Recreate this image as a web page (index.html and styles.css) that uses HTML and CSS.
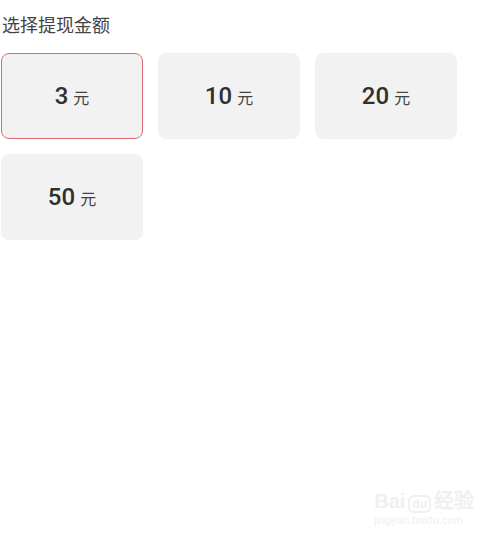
FILE: index.html
```html
<!DOCTYPE html>
<html lang="zh-CN">
<head>
  <meta charset="UTF-8">
  <meta name="viewport" content="width=device-width, initial-scale=1.0">
  <title>选择提现金额</title>
  <link rel="stylesheet" href="styles.css">
</head>
<body>

  <div class="page">
    <div class="title">选择提现金额</div>

    <!-- amount options -->
    <div class="amount-grid">
      <div class="amount active"><span class="num">3</span><span class="unit">元</span></div>
      <div class="amount"><span class="num">10</span><span class="unit">元</span></div>
      <div class="amount"><span class="num">20</span><span class="unit">元</span></div>
      <div class="amount"><span class="num">50</span><span class="unit">元</span></div>
    </div>
  </div>

  <!-- watermark -->
  <div class="watermark">
    <div class="wm-logo">Bai<span class="wm-du">du</span>经验</div>
    <div class="wm-url">jingyan.baidu.com</div>
  </div>

</body>
</html>
```

FILE: styles.css
```css
/* General */
body {
  margin: 0;
  width: 500px;
  height: 545px;
  background: #ffffff;
  font-family: "Noto Sans CJK SC", "Noto Sans", Roboto, sans-serif;
  color: #333333;
  overflow: hidden;
  position: relative;
}

.page {
  padding: 11px 0 0 1px;
}

.title {
  font-size: 18px;
  line-height: 26px;
  color: #444444;
  padding-left: 1px;
}

/* Amount grid */
.amount-grid {
  display: grid;
  grid-template-columns: repeat(3, 142px);
  grid-auto-rows: 86px;
  column-gap: 15px;
  row-gap: 15px;
  margin-top: 16px;
}

.amount {
  display: flex;
  align-items: center;
  justify-content: center;
  background: #f2f2f2;
  border: 1.5px solid #f2f2f2;
  border-radius: 8px;
  box-sizing: border-box;
}

.amount.active {
  border-color: #dc6b72;
}

.num {
  font-family: Roboto, "Noto Sans", sans-serif;
  font-size: 24px;
  font-weight: 500;
  color: #303030;
}

.unit {
  font-size: 16px;
  color: #444444;
  margin-left: 5px;
  padding-top: 2px;
}

/* Watermark */
.watermark {
  position: absolute;
  right: 26px;
  bottom: 18px;
  color: #f0f0f0;
  text-align: left;
}

.wm-logo {
  font-family: "Liberation Sans", sans-serif;
  font-size: 20px;
  font-weight: bold;
  line-height: 22px;
}

.wm-du {
  display: inline-block;
  font-size: 12px;
  border: 2px solid #f0f0f0;
  border-radius: 6px;
  padding: 0 2px;
  margin: 0 3px;
  line-height: 14px;
}

.wm-url {
  font-family: "Liberation Sans", sans-serif;
  font-size: 11px;
  line-height: 14px;
}
```
